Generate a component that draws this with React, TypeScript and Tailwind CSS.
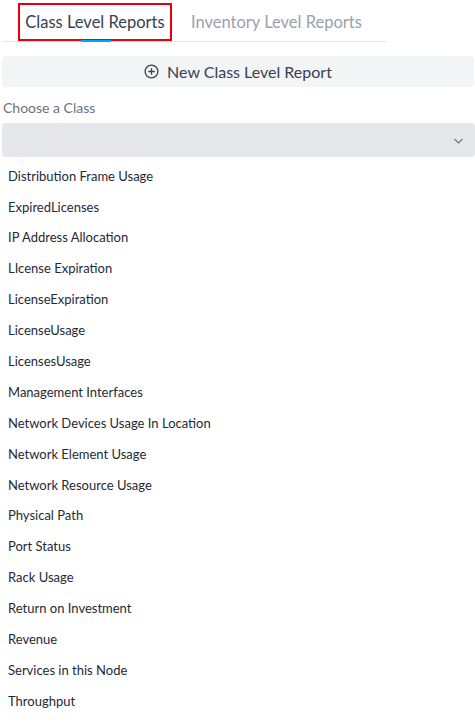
import React from 'react';

const items = [
  'Distribution Frame Usage', 'ExpiredLicenses', 'IP Address Allocation', 'LIcense Expiration',
  'LicenseExpiration', 'LicenseUsage', 'LicensesUsage', 'Management Interfaces',
  'Network Devices Usage In Location', 'Network Element Usage', 'Network Resource Usage',
  'Physical Path', 'Port Status', 'Rack Usage', 'Return on Investment', 'Revenue',
  'Services in this Node', 'Throughput',
];

const App: React.FC = () => (
  <div className="w-[475px] h-[723px] bg-white overflow-hidden" style={{ fontFamily: 'Lato, "Noto Sans", sans-serif' }}>
    <div className="w-[385px] ml-[2px] border-b border-gray-200 flex items-end h-[42px] relative">
      <div className="ml-[16px] w-[154px] h-[38px] border-2 border-red-600 flex items-center justify-center text-[16.5px] text-[#374151]">
        Class Level Reports
      </div>
      <div className="ml-[19px] h-[38px] flex items-center text-[16.5px] text-gray-400">Inventory Level Reports</div>
      <div className="absolute left-[79px] bottom-[-1px] w-[30px] h-[2px] bg-sky-500" />
    </div>
    <button className="mt-[14px] ml-[2px] w-[472px] h-[31px] rounded bg-gray-100 flex items-center justify-center gap-2 text-[16px] text-[#374151]">
      <svg width="15" height="15" viewBox="0 0 16 16" fill="none" stroke="currentColor" strokeWidth="1.4">
        <circle cx="8" cy="8" r="6.8" />
        <path d="M8 4.5v7M4.5 8h7" />
      </svg>
      New Class Level Report
    </button>
    <div className="mt-[10px] ml-[3px] text-[14px] text-gray-500">Choose a Class</div>
    <div className="mt-[5px] ml-[2px] w-[473px] h-[34px] rounded bg-gray-200 flex items-center justify-end pr-[10px]">
      <svg width="13" height="13" viewBox="0 0 16 16" fill="none" stroke="#6b7280" strokeWidth="1.6">
        <path d="M3 6l5 5 5-5" />
      </svg>
    </div>
    <ul className="mt-[4px] ml-[8px]">
      {items.map(i => (
        <li key={i} className="h-[30.9px] flex items-center text-[13px] text-[#1f2937]">{i}</li>
      ))}
    </ul>
  </div>
);

export default App;
